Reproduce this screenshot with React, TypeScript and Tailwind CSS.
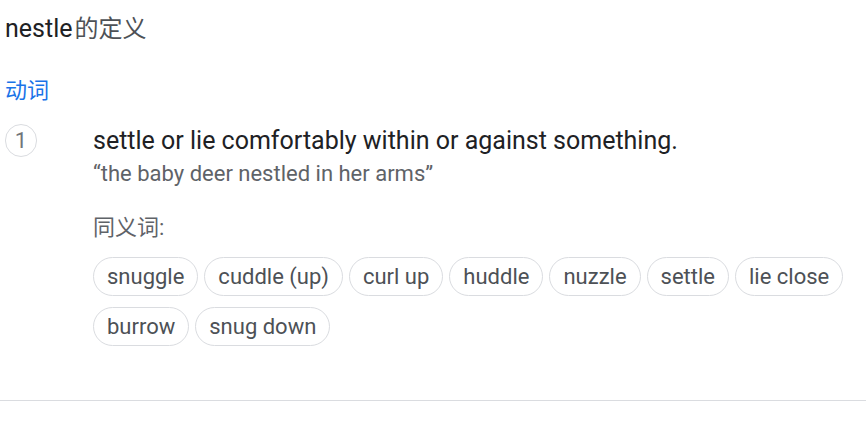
import React from "react";

const chips = ["snuggle", "cuddle (up)", "curl up", "huddle", "nuzzle", "settle", "lie close", "burrow", "snug down"];

export default function App() {
  return (
    <div className="w-[866px] h-[421px] bg-white flex flex-col" style={{ fontFamily: "Roboto, 'Noto Sans CJK SC', Arial, sans-serif" }}>
      <div className="pl-[5px] pt-[13px] h-[36px] text-[25px] leading-[32px] text-[#202124]">
        nestle<span className="text-[#4d5156] text-[24px] ml-[2px]">的定义</span>
      </div>
      <div className="pl-[5px] mt-[40px] h-[30px] text-[22px] leading-[30px] text-[#1a73e8]">动词</div>
      <div className="flex mt-[18px]">
        <div className="w-[93px] pl-[5px] shrink-0">
          <div className="w-[32px] h-[33px] rounded-full border border-[#dadce0] flex items-center justify-center text-[22px] leading-none text-[#70757a]">1</div>
        </div>
        <div className="flex flex-col">
          <div className="text-[25px] leading-[34px] text-[#202124]">settle or lie comfortably within or against something.</div>
          <div className="text-[22px] leading-[32px] text-[#5f6368]">“the baby deer nestled in her arms”</div>
          <div className="text-[22px] leading-[30px] text-[#5f6368] mt-[23px]">同义词:</div>
          <div className="flex flex-wrap gap-x-[6px] gap-y-[11px] mt-[14px] w-[770px]">
            {chips.map((c) => (
              <div key={c} className="h-[39px] px-[13px] rounded-full border border-[#dadce0] flex items-center text-[22px] text-[#4d5156]">
                {c}
              </div>
            ))}
          </div>
        </div>
      </div>
      <div className="mt-[54px] border-t border-[#dadce0]"></div>
    </div>
  );
}
